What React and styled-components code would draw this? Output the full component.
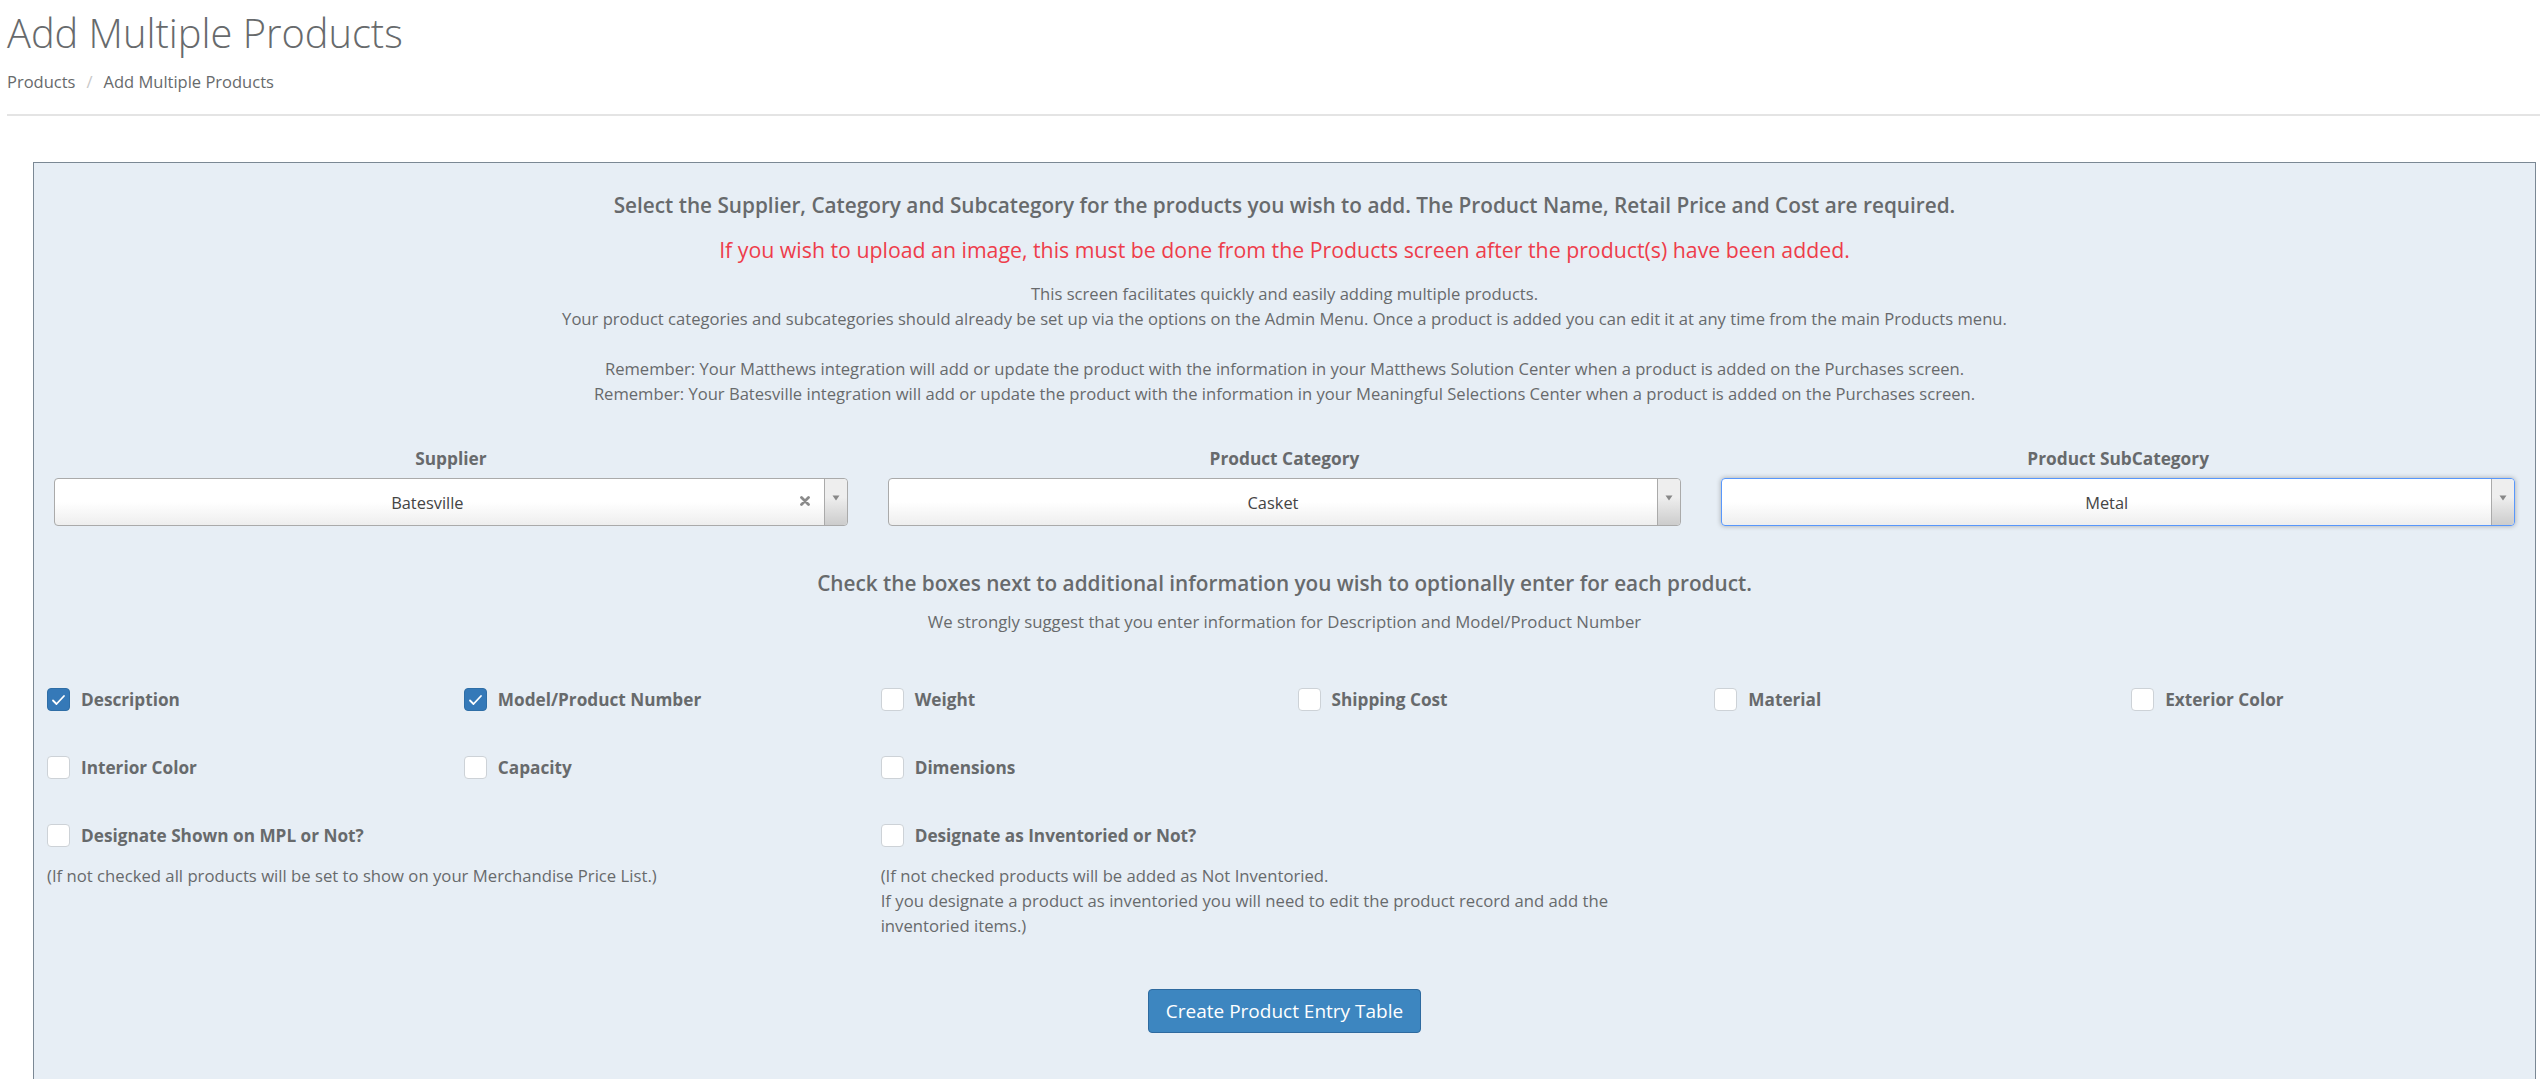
import React from 'react';
import styled, { createGlobalStyle } from 'styled-components';

const GlobalStyle = createGlobalStyle`
  html, body { margin: 0; padding: 0; background: #ffffff; }
  body {
    font-family: "Open Sans", "Liberation Sans", Arial, sans-serif;
    color: #676a6c;
  }
  * { box-sizing: border-box; }
`;

const Page = styled.div`
  padding-left: 7px;
  padding-bottom: 40px;
`;

const Title = styled.h1`
  margin: 11px 0 0;
  font-size: 39.8px;
  font-weight: 300;
  line-height: 1.1;
  color: #676a6c;
`;

const Breadcrumb = styled.nav`
  margin-top: 15px;
  display: flex;
  align-items: center;
  font-size: 16.5px;
  line-height: 24.4px;
`;

const Crumb = styled.span`
  color: #676a6c;
`;

const Sep = styled.span`
  color: #c8c8c8;
  padding: 0 11px;
`;

const Divider = styled.hr`
  margin: 20px 0 0;
  border: 0;
  border-top: 2px solid #e4e4e4;
  height: 0;
`;

const Panel = styled.section`
  margin: 46px 4px 0 26px;
  border: 1px solid #7b8894;
  background: #e7eef5;
  padding: 28px 0 60px;
`;

const Intro = styled.div`
  text-align: center;
`;

const Heading = styled.p`
  margin: ${(p) => p.$mt || 0}px 0 0;
  font-size: 20.75px;
  line-height: 29.4px;
  font-weight: 600;
  color: #676a6c;
  text-align: center;
`;

const Warning = styled.p`
  margin: 15.5px 0 0;
  font-size: 21.3px;
  line-height: 28px;
  color: #ee3d4b;
`;

const Note = styled.p`
  margin: ${(p) => p.$mt || 0}px 0 0;
  font-size: ${(p) => p.$size || 16.6}px;
  line-height: 25px;
  color: #676a6c;
  text-align: center;
`;

const SelectGrid = styled.div`
  margin-top: 41px;
  padding: 0 20px;
  display: grid;
  grid-template-columns: repeat(3, 1fr);
  column-gap: 40px;
`;

const Field = styled.div`
  display: flex;
  flex-direction: column;
`;

const FieldLabel = styled.label`
  font-size: 17.3px;
  line-height: 24px;
  font-weight: 700;
  color: #676a6c;
  text-align: center;
  margin-bottom: 7px;
`;

const SelectBox = styled.div`
  height: 48px;
  display: flex;
  align-items: stretch;
  border: 1px solid ${(p) => (p.$focused ? '#5897fb' : '#aaaaaa')};
  border-radius: 4px;
  background: linear-gradient(to top, #eeeeee 0%, #ffffff 50%);
  box-shadow: ${(p) => (p.$focused ? '0 0 5px rgba(0,0,0,0.3)' : 'none')};
`;

const SelectValue = styled.span`
  flex: 1;
  text-align: center;
  line-height: 47px;
  font-size: 16.4px;
  color: #444444;
  white-space: nowrap;
  overflow: hidden;
`;

const ClearBtn = styled.span`
  width: 24px;
  display: flex;
  align-items: center;
  justify-content: flex-start;
  padding-bottom: 3px;
`;

const ArrowCell = styled.span`
  width: 23px;
  border-left: 1px solid #aaaaaa;
  border-radius: 0 4px 4px 0;
  background: linear-gradient(to top, #cccccc 0%, #eeeeee 60%);
  display: flex;
  justify-content: center;
  padding-top: 16px;
`;

const CheckGrid = styled.div`
  margin-top: ${(p) => p.$mt}px;
  padding: 0 17px 0 13px;
  display: grid;
  grid-template-columns: repeat(${(p) => p.$cols}, 1fr);
  column-gap: 30px;
  row-gap: 45px;
`;

const CheckItem = styled.label`
  display: flex;
  align-items: center;
  gap: 11px;
  height: 23px;
`;

const Box = styled.span`
  width: 23px;
  height: 23px;
  flex: none;
  border-radius: 4px;
  border: 1px solid ${(p) => (p.$checked ? '#2f6ea6' : '#cdd2d7')};
  background: ${(p) => (p.$checked ? '#3579b8' : '#ffffff')};
  display: flex;
  align-items: center;
  justify-content: center;
`;

const CheckText = styled.span`
  font-size: 17.2px;
  font-weight: 700;
  color: #676a6c;
  line-height: 23px;
  white-space: nowrap;
`;

const ExtraCol = styled.div`
  display: flex;
  flex-direction: column;
`;

const HelpText = styled.p`
  margin: 15.5px 0 0;
  font-size: 16.7px;
  line-height: 25px;
  color: #676a6c;
`;

const ButtonRow = styled.div`
  margin-top: 51px;
  display: flex;
  justify-content: center;
`;

const PrimaryButton = styled.button`
  height: 44px;
  padding: 0 17px;
  font-family: "Open Sans", "Liberation Sans", Arial, sans-serif;
  font-size: 19px;
  color: #ffffff;
  background: #3d86c0;
  border: 1px solid #2e6a9f;
  border-radius: 4px;
  cursor: pointer;
`;

const ClearIcon = () => (
  <svg width="10" height="10" viewBox="0 0 10 10">
    <path d="M1.5 1.5 L8.5 8.5 M8.5 1.5 L1.5 8.5" stroke="#8a8a8a" strokeWidth="2.8" strokeLinecap="round" />
  </svg>
);

const ArrowIcon = () => (
  <svg width="8" height="6" viewBox="0 0 8 6">
    <path d="M0.5 0.5 L7.5 0.5 L4 5.5 Z" fill="#888888" />
  </svg>
);

const CheckIcon = () => (
  <svg width="15" height="12" viewBox="0 0 15 12">
    <polyline points="2,6.5 5.5,10 13,2" fill="none" stroke="#ffffff" strokeWidth="1.8" strokeLinecap="round" strokeLinejoin="round" />
  </svg>
);

const Select = ({ value, clearable, focused }) => (
  <SelectBox $focused={focused}>
    <SelectValue>{value}</SelectValue>
    {clearable && (
      <ClearBtn>
        <ClearIcon />
      </ClearBtn>
    )}
    <ArrowCell>
      <ArrowIcon />
    </ArrowCell>
  </SelectBox>
);

const Check = ({ label, checked }) => (
  <CheckItem>
    <Box $checked={checked}>{checked && <CheckIcon />}</Box>
    <CheckText>{label}</CheckText>
  </CheckItem>
);

const options = [
  { label: 'Description', checked: true },
  { label: 'Model/Product Number', checked: true },
  { label: 'Weight' },
  { label: 'Shipping Cost' },
  { label: 'Material' },
  { label: 'Exterior Color' },
  { label: 'Interior Color' },
  { label: 'Capacity' },
  { label: 'Dimensions' },
];

export default function App() {
  return (
    <>
      <GlobalStyle />
      <Page>
        <Title>Add Multiple Products</Title>
        <Breadcrumb>
          <Crumb>Products</Crumb>
          <Sep>/</Sep>
          <Crumb>Add Multiple Products</Crumb>
        </Breadcrumb>
        <Divider />

        <Panel>
          <Intro>
            <Heading>
              Select the Supplier, Category and Subcategory for the products you wish to add. The Product Name, Retail Price and Cost are required.
            </Heading>
            <Warning>
              If you wish to upload an image, this must be done from the Products screen after the product(s) have been added.
            </Warning>
            <Note $mt={17}>
              This screen facilitates quickly and easily adding multiple products.
              <br />
              Your product categories and subcategories should already be set up via the options on the Admin Menu. Once a product is added you can edit it at any time from the main Products menu.
              <br />
              <br />
              Remember: Your Matthews integration will add or update the product with the information in your Matthews Solution Center when a product is added on the Purchases screen.
              <br />
              Remember: Your Batesville integration will add or update the product with the information in your Meaningful Selections Center when a product is added on the Purchases screen.
            </Note>
          </Intro>

          <SelectGrid>
            <Field>
              <FieldLabel>Supplier</FieldLabel>
              <Select value="Batesville" clearable />
            </Field>
            <Field>
              <FieldLabel>Product Category</FieldLabel>
              <Select value="Casket" />
            </Field>
            <Field>
              <FieldLabel>Product SubCategory</FieldLabel>
              <Select value="Metal" focused />
            </Field>
          </SelectGrid>

          <Heading $mt={43}>
            Check the boxes next to additional information you wish to optionally enter for each product.
          </Heading>
          <Note $mt={11} $size={16.75}>
            We strongly suggest that you enter information for Description and Model/Product Number
          </Note>

          <CheckGrid $cols={6} $mt={54}>
            {options.map((o) => (
              <Check key={o.label} label={o.label} checked={o.checked} />
            ))}
          </CheckGrid>

          <CheckGrid $cols={3} $mt={45}>
            <ExtraCol>
              <Check label="Designate Shown on MPL or Not?" />
              <HelpText>(If not checked all products will be set to show on your Merchandise Price List.)</HelpText>
            </ExtraCol>
            <ExtraCol>
              <Check label="Designate as Inventoried or Not?" />
              <HelpText>
                (If not checked products will be added as Not Inventoried.
                <br />
                If you designate a product as inventoried you will need to edit the product record and add the inventoried items.)
              </HelpText>
            </ExtraCol>
          </CheckGrid>

          <ButtonRow>
            <PrimaryButton>Create Product Entry Table</PrimaryButton>
          </ButtonRow>
        </Panel>
      </Page>
    </>
  );
}
